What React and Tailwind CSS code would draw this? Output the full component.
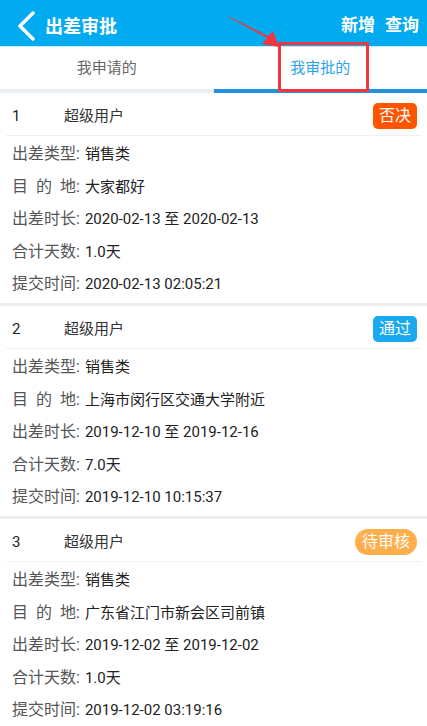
import React from 'react';

const records = [
  {
    no: 1,
    user: '超级用户',
    status: '否决',
    badge: 'rounded-[5px] bg-[#ff5500] px-[6px] w-[44px]',
    type: '销售类',
    place: '大家都好',
    range: '2020-02-13 至 2020-02-13',
    days: '1.0天',
    submitted: '2020-02-13 02:05:21',
  },
  {
    no: 2,
    user: '超级用户',
    status: '通过',
    badge: 'rounded-[5px] bg-[#19a9f0] px-[6px] w-[44px]',
    type: '销售类',
    place: '上海市闵行区交通大学附近',
    range: '2019-12-10 至 2019-12-16',
    days: '7.0天',
    submitted: '2019-12-10 10:15:37',
  },
  {
    no: 3,
    user: '超级用户',
    status: '待审核',
    badge: 'rounded-full bg-[#ffae4c] w-[62px]',
    type: '销售类',
    place: '广东省江门市新会区司前镇',
    range: '2019-12-02 至 2019-12-02',
    days: '1.0天',
    submitted: '2019-12-02 03:19:16',
  },
];

const Label = ({ children }) => (
  <span className="flex w-[64px] flex-none justify-between text-[16px] text-[#555]">
    {children.split('').map((ch, i) => (
      <span key={i}>{ch}</span>
    ))}
  </span>
);

const Row = ({ label, value }) => (
  <div className="flex h-[32.5px] items-center px-[12px]">
    <Label>{label}</Label>
    <span className="text-[16px] text-[#555]">:</span>
    <span className="ml-[5px] text-[15px] text-[#222]">{value}</span>
  </div>
);

const Card = ({ r }) => (
  <div className="bg-white pb-[2.5px]">
    <div className="flex h-[42px] items-center pt-[4px] pl-[12px] pr-[10px]">
      <span className="w-[52px] text-[15px] text-[#222]">{r.no}</span>
      <span className="text-[15px] text-[#333]">{r.user}</span>
      <span
        className={`ml-auto flex h-[26px] items-center justify-center text-[16px] text-white ${r.badge}`}
      >
        {r.status}
      </span>
    </div>
    <div className="mx-[6px] h-px bg-[#eef0f2]" />
    <div className="pt-[2px]">
      <Row label="出差类型" value={r.type} />
      <Row label="目的地" value={r.place} />
      <Row label="出差时长" value={r.range} />
      <Row label="合计天数" value={r.days} />
      <Row label="提交时间" value={r.submitted} />
    </div>
  </div>
);

export default function App() {
  return (
    <div
      className="relative h-[726px] w-[427px] overflow-hidden bg-[#eeeeee]"
      style={{ fontFamily: '"Roboto", "Noto Sans CJK SC", sans-serif' }}
    >
      <header className="flex h-[46px] items-center bg-[#02aaef] pt-[6px] pr-[8px] pl-[16px] text-white">
        <svg width="20" height="30" viewBox="0 0 20 30" className="mr-[9px]">
          <path d="M17 2 L4 15 L17 28" fill="none" stroke="white" strokeWidth="3.5" strokeLinecap="round" strokeLinejoin="round" />
        </svg>
        <span className="text-[18px] font-bold">出差审批</span>
        <div className="ml-auto flex gap-[10px] text-[17px] font-bold">
          <span>新增</span>
          <span>查询</span>
        </div>
      </header>
      <div className="h-px bg-[#c8ebfa]" />

      <nav className="bg-white">
        <div className="flex h-[42px]">
          <div className="flex flex-1 items-center justify-center text-[15px] text-[#666]">我申请的</div>
          <div className="flex flex-1 items-center justify-center text-[15px] text-[#2ba3e6]">我审批的</div>
        </div>
        <div className="flex h-[4px]">
          <div className="flex-1 bg-[#eceff1]" />
          <div className="flex-1 bg-[#2392e0]" />
        </div>
      </nav>

      <div className="flex flex-col gap-[3px]">
        {records.map((r) => (
          <Card key={r.no} r={r} />
        ))}
      </div>

      {/* annotation overlay */}
      <div className="absolute top-[42px] left-[278px] h-[50px] w-[91px] border-[3px] border-[#f2363f]" />
      <svg className="absolute top-0 left-0" width="427" height="100" viewBox="0 0 427 100">
        <path d="M228 16 L230 18 L267 38 L262 44 L279 47 L273 31 L268 36 Z" fill="#f2363f" />
      </svg>
    </div>
  );
}
